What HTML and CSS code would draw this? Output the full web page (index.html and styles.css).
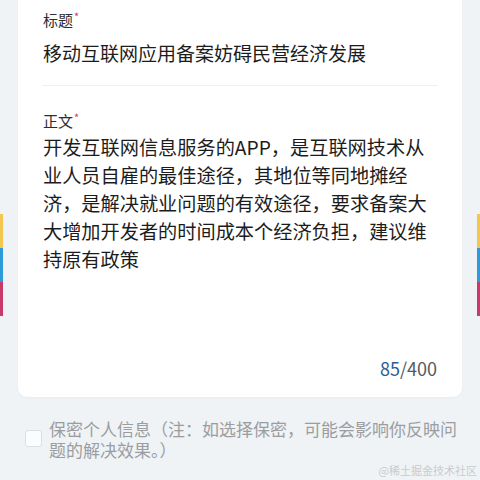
FILE: index.html
```html
<!DOCTYPE html>
<html lang="zh-CN">
<head>
<meta charset="utf-8">
<link rel="stylesheet" href="styles.css">
</head>
<body>
<div class="strip strip-left"><span class="s-y"></span><span class="s-b"></span><span class="s-p"></span></div>
<div class="strip strip-right"><span class="s-y"></span><span class="s-b"></span><span class="s-p"></span></div>
<main class="page">
  <section class="card">
    <div class="field">
      <div class="label">标题<span class="req">*</span></div>
      <div class="title-value">移动互联网应用备案妨碍民营经济发展</div>
    </div>
    <div class="divider"></div>
    <div class="field">
      <div class="label label-body">正文<span class="req">*</span></div>
      <div class="body-value">开发互联网信息服务的APP，是互联网技术从业人员自雇的最佳途径，其地位等同地摊经济，是解决就业问题的有效途径，要求备案大大增加开发者的时间成本个经济负担，建议维持原有政策</div>
      <div class="counter"><span class="count-now">85</span>/400</div>
    </div>
  </section>
  <label class="privacy">
    <span class="checkbox"></span>
    <span class="privacy-text">保密个人信息（注：如选择保密，可能会影响你反映问题的解决效果。）</span>
  </label>
</main>
<div class="watermark">@稀土掘金技术社区</div>
</body>
</html>
```
FILE: styles.css
```css
* { box-sizing: border-box; }
html, body {
  margin: 0;
  padding: 0;
  width: 480px;
  height: 480px;
  overflow: hidden;
  background: #eff3f6;
  font-family: "Noto Sans CJK SC", "Noto Sans", sans-serif;
  color: #1e1e1e;
}
.page {
  display: flex;
  flex-direction: column;
}
.card {
  margin: 0 18px;
  background: #ffffff;
  border-radius: 0 0 9px 9px;
  padding: 10px 25px 17px 25px;
  box-shadow: 0 1px 2px rgba(0,0,0,0.03);
}
.label {
  font-size: 15px;
  line-height: 20px;
  color: #2e2e2e;
  display: flex;
  align-items: flex-start;
}
.req {
  color: #c64458;
  font-size: 11px;
  line-height: 11px;
  margin-left: 1px;
  margin-top: 1px;
}
.title-value {
  margin-top: 9px;
  font-size: 19px;
  line-height: 28px;
  color: #1c1c1c;
}
.divider {
  height: 1px;
  background: #eef0f2;
  margin: 18px -1px 0 -1px;
}
.label-body {
  margin-top: 25px;
}
.body-value {
  margin-top: 2px;
  font-size: 19.2px;
  line-height: 28px;
  height: 223px;
  color: #1c1c1c;
}
.counter {
  text-align: right;
  font-size: 18px;
  line-height: 24px;
  color: #555a5e;
}
.count-now {
  color: #2d5d8e;
}
.privacy {
  display: flex;
  align-items: center;
  gap: 7px;
  margin: 21px 18px 0 25px;
}
.checkbox {
  flex: none;
  width: 17px;
  height: 17px;
  border: 1px solid #dcdfe2;
  border-radius: 3px;
  background: #fbfcfd;
  margin-top: -2px;
}
.privacy-text {
  font-size: 17px;
  line-height: 21px;
  color: #9b9da0;
}
.strip {
  position: absolute;
  top: 214px;
  width: 3px;
  display: flex;
  flex-direction: column;
}
.strip-left { left: 0; }
.strip-right { right: 0; }
.strip span { display: block; width: 3px; height: 34px; }
.s-y { background: #f3c64f; }
.s-b { background: #2f9ad8; }
.s-p { background: #c83a6a; }
.watermark {
  position: absolute;
  right: 3px;
  bottom: 3px;
  font-size: 11px;
  line-height: 13px;
  color: #c9cbcd;
  font-family: "Noto Sans CJK SC", sans-serif;
}
```
